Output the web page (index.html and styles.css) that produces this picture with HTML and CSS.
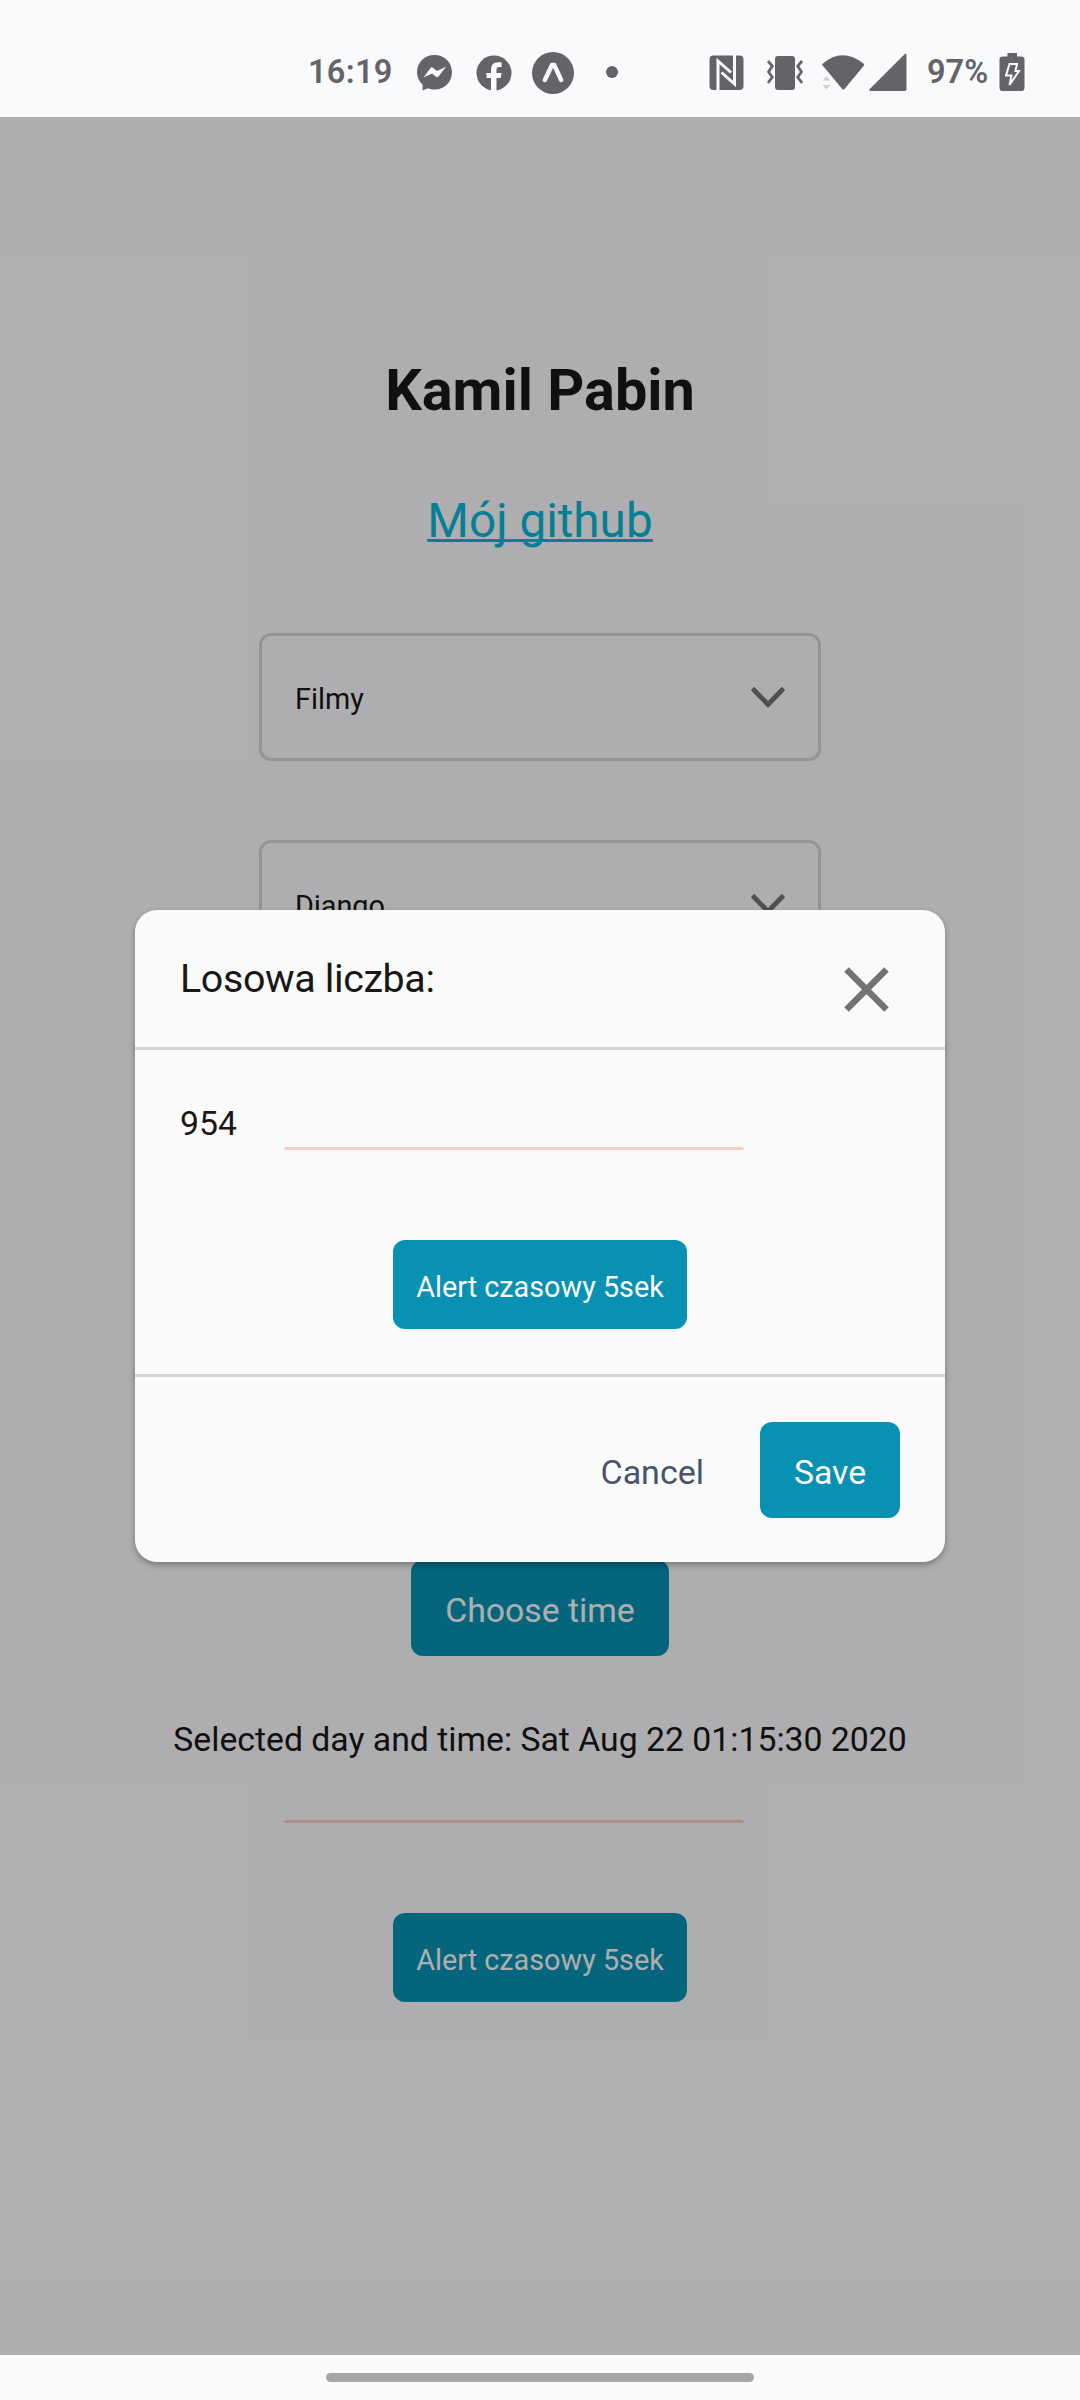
FILE: index.html
```html
<!DOCTYPE html>
<html lang="pl">
<head>
<meta charset="utf-8">
<title>Kamil Pabin</title>
<link rel="stylesheet" href="styles.css">
</head>
<body>
<header class="status">
  <span class="clock">16:19</span>
  <svg class="ic-messenger" width="37" height="37" viewBox="0 0 37 37"><path fill="#636467" d="M18.500 1C28.500 1 36 8.400 36 18.200S28.500 35.500 18.500 35.500C16 35.500 14 35.100 12 34.300L6.500 36.500V30.500C3 27.300 1 23 1 18.200C1 8.400 8.500 1 18.500 1Z"/><path fill="#f9fafc" d="M7.500 23.500L14.500 14Q15.500 12.800 17 13.800L21 17L30 12.800L22.500 22.600Q21.500 23.800 20 22.800L16 19.600Z"/></svg>
  <svg class="ic-facebook" width="36" height="36" viewBox="0 0 36 36"><circle cx="18" cy="18" r="17.500" fill="#636467"/><path fill="#f9fafc" d="M15 36V23H10.500V18H15V14.500Q15 7.200 22 7.200H25.500V12H23Q20.500 12 20.500 14.500V18H25.500L24.700 23H20.500V36Z"/></svg>
  <svg class="ic-expo" width="42" height="42" viewBox="0 0 42 42"><circle cx="21" cy="21" r="21" fill="#636467"/><path fill="none" stroke="#f9fafc" stroke-width="4.400" stroke-linecap="round" stroke-linejoin="round" d="M12.800 28L20 13H22.200L29.200 28"/></svg>
  <span class="dot"></span>
  <svg class="ic-nfc" width="36" height="36" viewBox="0 0 36 36"><rect x=".5" y=".5" width="34" height="34.500" rx="4" fill="#636467"/><path fill="none" stroke="#f9fafc" stroke-width="3" d="M9 36V6L22 17.500M25.500 0V29L12.500 17.500"/></svg>
  <svg class="ic-vibrate" width="38" height="36" viewBox="0 0 38 36"><rect x="9" y="1" width="20" height="34" rx="3" fill="#636467"/><path fill="none" stroke="#636467" stroke-width="2.700" d="M2 6L6.300 11L2.500 17L6.300 22L2 28M36 6L31.700 11L35.500 17L31.700 22L36 28"/></svg>
  <svg class="ic-signal" width="88" height="40" viewBox="0 0 88 40"><path fill="#636467" d="M.7 12.500Q-.3 11.500 1 10.500Q20-6 41.500 10.500Q42.800 11.500 41.800 12.700L22.500 36Q21.300 37 20.200 36ZM82 1.700Q84.500-.5 84.500 2V36Q84.500 38 82.500 38H49Q46 38 48 35.700Z"/><path fill="#d0d1d3" d="M.5 27.500L4.500 23L8.500 27.500ZM.5 32H8.500L4.500 36.500Z"/></svg>
  <span class="percent">97%</span>
  <svg class="ic-battery" width="26" height="38" viewBox="0 0 26 38"><path fill="#636467" d="M8.500 0H18V3.500H22.500Q25.500 3.500 25.500 6.500V34.500Q25.500 38 22.500 38H3.500Q.5 38 .5 34.500V6.500Q.5 3.500 3.500 3.500H8.500Z"/><path fill="none" stroke="#f9fafc" stroke-width="2" d="M10.500 11H18L16.500 18H20L10.500 32L12.500 22.500H7Z"/></svg>
</header>

<main class="screen">
  <h1 class="name">Kamil Pabin</h1>
  <a class="link">Mój github</a>
  <div class="select"><span>Filmy</span><svg width="36" height="24" viewBox="0 0 36 24"><path d="M2.500 2.500L18 18.500L33.500 2.500"/></svg></div>
  <div class="select"><span>Django</span><svg width="36" height="24" viewBox="0 0 36 24"><path d="M2.500 2.500L18 18.500L33.500 2.500"/></svg></div>
  <div class="btn choose">Choose time</div>
  <p class="selected">Selected day and time: Sat Aug 22 01:15:30 2020</p>
  <div class="rule page-rule"></div>
  <div class="btn alert">Alert czasowy 5sek</div>

  <div class="backdrop">
    <section class="modal">
      <header class="modal-head">
        <h2 class="title">Losowa liczba:</h2>
        <svg class="close" width="45" height="45" viewBox="0 0 45 45"><path d="M2.500 2.500L42.500 42.500M42.500 2.500L2.500 42.500"/></svg>
      </header>
      <div class="modal-body">
        <p class="number">954</p>
        <div class="rule modal-rule"></div>
        <div class="btn alert">Alert czasowy 5sek</div>
      </div>
      <footer class="modal-foot">
        <span class="cancel">Cancel</span>
        <div class="btn save">Save</div>
      </footer>
    </section>
  </div>
</main>

<nav class="navbar"><span class="pill"></span></nav>
</body>
</html>
```
FILE: styles.css
```css
* { box-sizing: border-box; margin: 0; }
body {
  width: 1080px; height: 2400px; display: flex; flex-direction: column;
  font-family: Roboto, sans-serif; font-size: 33.75px; color: #171717; overflow: hidden;
}
svg { display: block; flex: none; }

.status {
  height: 117px; flex: none; display: flex; align-items: flex-start;
  padding-left: 308px; background: #f9fafc; color: #636467;
}
.clock, .percent { font-size: 32.5px; font-weight: 600; line-height: 38px; margin-top: 53px; white-space: nowrap; flex: none; }
.clock { width: 108px; letter-spacing: .3px; }
.percent { width: 71px; }
.ic-messenger { margin-top: 54px; }
.ic-facebook { margin: 55px 0 0 23px; }
.ic-expo { margin: 52px 0 0 20px; }
.dot { width: 12px; height: 12px; border-radius: 50%; background: #636467; margin: 66px 0 0 32px; flex: none; }
.ic-nfc { margin: 55px 0 0 91px; }
.ic-vibrate { margin: 55px 0 0 21px; }
.ic-signal { margin: 53px 0 0 18px; }
.percent { margin-left: 17px; letter-spacing: 0; }
.ic-battery { margin: 53px 0 0 1px; }

.screen {
  position: relative; height: 2238px; flex: none; background: #f9fafc;
  display: flex; flex-direction: column; align-items: center;
}
.name { font-size: 57.6px; font-weight: 700; line-height: 66px; margin-top: 241px; }
.link {
  font-size: 47.7px; line-height: 54px; margin-top: 70px; margin-bottom: 85px; color: #06b6d4;
  text-decoration: underline; text-decoration-skip-ink: none; text-decoration-thickness: 3px;
}
.select {
  width: 562px; height: 128px; flex: none; margin-bottom: 79px; padding: 0 32px 0 33px;
  display: flex; align-items: center; justify-content: space-between;
  border: 3px solid #d4d4d4; border-radius: 12px; font-size: 28.8px; line-height: 34px;
}
.select span { padding-top: 4px; }
.select svg { margin-top: 2px; }
.select path { fill: none; stroke: #737373; stroke-width: 4.800; }
.btn {
  display: flex; align-items: center; justify-content: center; flex: none; white-space: nowrap;
  background: #0891b2; color: #fafafa; border-radius: 12px;
}
.choose { width: 258px; height: 96px; margin-top: 513px; padding-top: 4px; }
.selected { line-height: 40px; margin-top: 64px; white-space: nowrap; }
.rule { width: 460px; height: 3px; background: #fecaca; border-radius: 3px 3px 0 0; }
.alert { width: 294px; height: 89px; font-size: 28.8px; padding-top: 5px; }
.page-rule { margin: 60px 52px 90px 0; }

.backdrop {
  position: absolute; inset: 0; display: flex; align-items: center; justify-content: center;
  background: rgba(0, 0, 0, .3);
}
.modal {
  width: 810px; height: 652px; display: flex; flex-direction: column;
  background: #fafafa; border-radius: 22px; box-shadow: 0 3px 6px rgba(0, 0, 0, .3);
}
.modal-head {
  height: 140px; flex: none; display: flex; justify-content: space-between; align-items: flex-start;
  padding: 45px 56px 0 45px; border-bottom: 3px solid #d4d4d4;
}
.title { font-size: 39.375px; font-weight: 400; line-height: 46px; letter-spacing: -.35px; margin-top: 1px; }
.close { margin-top: 12px; }
.close path { fill: none; stroke: #737373; stroke-width: 6.500; }
.modal-body { height: 327px; flex: none; padding-top: 54px; border-bottom: 3px solid #d4d4d4; }
.number { line-height: 40px; padding-left: 45px; }
.modal-rule { margin: 3px 0 90px 149px; }
.modal-body .alert { margin-left: 258px; }
.modal-foot { flex: 1; display: flex; justify-content: flex-end; align-items: flex-start; padding: 45px 45px 0 0; }
.cancel { color: #475569; line-height: 40px; font-size: 34px; margin: 30px 56px 0 0; }
.save { width: 140px; height: 96px; padding-top: 4px; }

.navbar { flex: 1; background: #fafafa; display: flex; justify-content: center; padding-top: 18px; }
.pill { width: 428px; height: 9px; border-radius: 5px; background: #a6a6a6; }
```
